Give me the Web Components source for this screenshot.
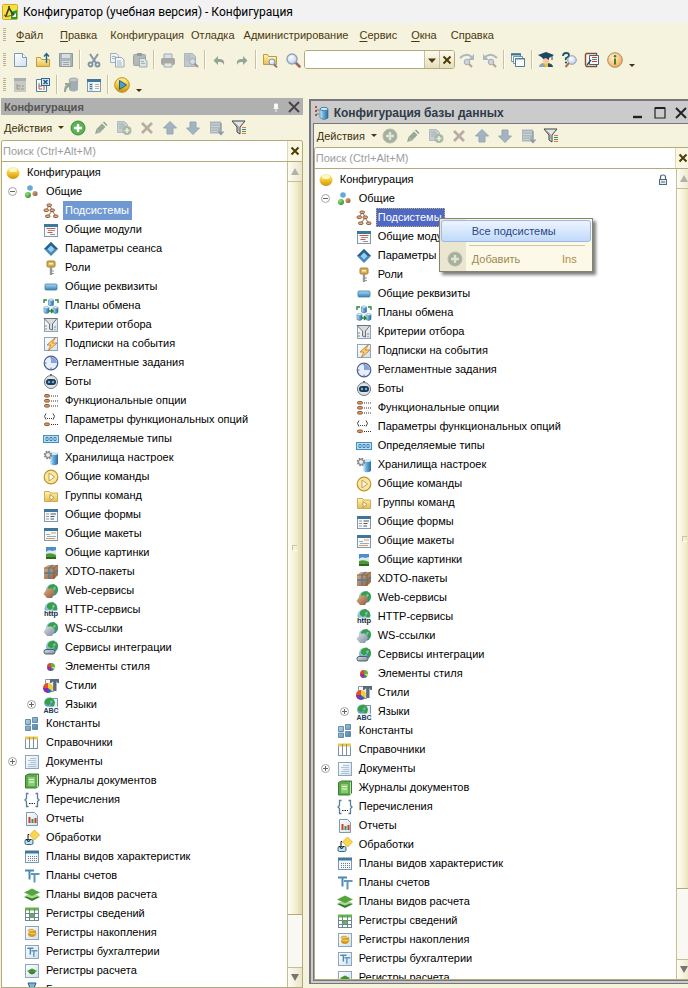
<!DOCTYPE html>
<html lang="ru">
<head>
<meta charset="utf-8">
<title>Конфигуратор</title>
<style>
body { margin: 0; font: 11px/18px "Liberation Sans", sans-serif; color: #000; }
</style>
</head>
<body>
<config-app></config-app>
<script>
const DEFS = `<defs>
<linearGradient id="gold" x1="0" y1="0" x2="0" y2="1"><stop offset="0" stop-color="#fff0a0"/><stop offset=".5" stop-color="#f5c832"/><stop offset="1" stop-color="#c8920c"/></linearGradient>
<linearGradient id="paper" x1="0" y1="0" x2="1" y2="1"><stop offset="0" stop-color="#fff"/><stop offset="1" stop-color="#cfe0ef"/></linearGradient>
<linearGradient id="cyl" x1="0" y1="0" x2="1" y2="0"><stop offset="0" stop-color="#d8f0fc"/><stop offset=".4" stop-color="#6cb0dc"/><stop offset="1" stop-color="#2c6ca0"/></linearGradient>
<linearGradient id="blue" x1="0" y1="0" x2="0" y2="1"><stop offset="0" stop-color="#a8dcf8"/><stop offset="1" stop-color="#3880b4"/></linearGradient>
<linearGradient id="steel" x1="0" y1="0" x2="1" y2="1"><stop offset="0" stop-color="#c4dcec"/><stop offset="1" stop-color="#4a7ca0"/></linearGradient>
<linearGradient id="brown" x1="0" y1="0" x2="1" y2="1"><stop offset="0" stop-color="#e0b088"/><stop offset="1" stop-color="#8c5a38"/></linearGradient>
<linearGradient id="grey" x1="0" y1="0" x2="1" y2="1"><stop offset="0" stop-color="#d8dee6"/><stop offset="1" stop-color="#808c9c"/></linearGradient>
<linearGradient id="folder" x1="0" y1="0" x2="0" y2="1"><stop offset="0" stop-color="#fdf4b8"/><stop offset="1" stop-color="#e6be50"/></linearGradient>
<radialGradient id="green" cx=".35" cy=".3" r=".8"><stop offset="0" stop-color="#90e070"/><stop offset="1" stop-color="#2f8a2c"/></radialGradient>
<radialGradient id="sky" cx=".35" cy=".3" r=".8"><stop offset="0" stop-color="#c4ecfc"/><stop offset="1" stop-color="#2c78b8"/></radialGradient>
<radialGradient id="glass" cx=".4" cy=".35" r=".7"><stop offset="0" stop-color="#fff"/><stop offset="1" stop-color="#b4ccec"/></radialGradient>
<radialGradient id="orange" cx=".4" cy=".35" r=".7"><stop offset="0" stop-color="#fff4d8"/><stop offset="1" stop-color="#f0a848"/></radialGradient>
</defs>`;
const plus = (fill, rim) => `<circle cx="8" cy="8" r="7" fill="${fill}" stroke="${rim}"/><path d="M8 4v8M4 8h8" stroke="#fff" stroke-width="2.4"/>`;
const plusOff = '<circle cx="8" cy="8" r="7" fill="#a5b09c" stroke="#b4bcaa"/><path d="M8 4v8M4 8h8" stroke="#dfe4d4" stroke-width="2.4"/>';
const page = '<rect x="1.5" y="1.5" width="13" height="13" fill="url(#paper)" stroke="#8ba6bd"/>';
const globe = (x, y, r) => `<circle cx="${x}" cy="${y}" r="${r}" fill="url(#sky)"/><path d="M${x - 2} ${y - r + 1}q-3 2-2 5l3 2 3-2-1-2 3-2-2-2zM${x + 2} ${y - r + 1}l2 3-2 3 1 3 2-1 1-4-1-3z" fill="#38a040"/>`;
const loupe = '<path d="M10.500 10.500l4 4" stroke="#a06a58" stroke-width="2.600" stroke-linecap="round"/><circle cx="7" cy="7" r="5" fill="url(#glass)" stroke="#93a0b8" stroke-width="1.400"/>';
const miniLoupe = '<path d="M12 12.500l3 2.800" stroke="#9b6a50" stroke-width="1.800"/><circle cx="10" cy="10" r="3" fill="url(#glass)" stroke="#7e92b0"/>';
const option = y => `<rect x="1.500" y="${y}" width="5" height="2.600" rx="1.300" fill="#d59a66" stroke="#8e5b39"/><path d="M8 ${y + 1.500}h8" stroke="#333" stroke-dasharray="1 1"/>`;
const node = (x, y) => `<rect x="${x}" y="${y}" width="4.500" height="2.500" rx="1.200" fill="#e3b084" stroke="#86502d" stroke-width=".900"/>`;
const can = (x, y) => `<path d="M${x} ${y}v5q2.500 1.800 5 0v-5z" fill="url(#cyl)" stroke="#3a7298" stroke-width=".600"/><ellipse cx="${x + 2.500}" cy="${y}" rx="2.500" ry="1.100" fill="#d7effb" stroke="#5f9abf" stroke-width=".500"/>`;
const tt = '<path d="M1 2.500h9M5.500 2v9.500" fill="none" stroke="#4c8ab4" stroke-width="2"/><path d="M7 6h8.500M10.500 5.500v9" fill="none" stroke="#5f98bc" stroke-width="2"/>';
const win = body => `<rect x="1.500" y="2.500" width="13" height="12" fill="#f5f9fc" stroke="#8299aa"/><path d="M1 3.500h14" stroke="#3f769c" stroke-width="3"/>${body}`;
const ICONS = {
app: '<rect x=".500" y=".500" width="15" height="15" rx="1" fill="#f9df46" stroke="#d3ac1b"/><path d="M9 8l6-2v9H9z" fill="#13a43b"/><path d="M7 2v3M7 4L3.500 13M7 4l5 8" fill="none" stroke="#3d3b22" stroke-width="1.600"/><path d="M2 11q4 3 9-1" fill="none" stroke="#59552a"/><path d="M10 13l4-4v4z" fill="#fff"/>',
newdoc: '<path d="M2.500 1.500h8l4 4v9h-12z" fill="url(#paper)" stroke="#7b9ab6"/><path d="M10.500 1.500v4h4" fill="#fff" stroke="#7b9ab6"/>',
open: '<path d="M1.500 5.500h4l1 2h8v7h-13z" fill="url(#folder)" stroke="#c39c36"/><path d="M11.500 11V2M9 4.500l2.500-3 2.500 3" fill="none" stroke="#28648a" stroke-width="1.400"/>',
save: '<path d="M1.500 1.500h13v13h-13z" fill="#a9b4bb" stroke="#8c999f"/><path d="M4 2h8v4H4zM4 9h8v5H4z" fill="#d8dedf"/><path d="M5 10.500h6M5 12.500h6" stroke="#98a5ac"/>',
cut: '<path d="M4 2l6 9M12 2L6 11" stroke="#8596a6" stroke-width="2"/><circle cx="4.500" cy="12.500" r="2" fill="none" stroke="#7d93a8" stroke-width="1.800"/><circle cx="11.500" cy="12.500" r="2" fill="none" stroke="#7d93a8" stroke-width="1.800"/>',
copy: '<path d="M1.500 1.500h6l2 2v7h-8z" fill="#eef2f2" stroke="#a1b0ba"/><path d="M6.500 5.500h6l2.500 2.500v7h-8.500z" fill="#f1f5f5" stroke="#94a7b5"/><path d="M3 4.500h4M3 6.500h3M8 9h4M8 11h5M8 13h5" stroke="#a4b6c2"/>',
paste: '<rect x="1.500" y="2.500" width="12" height="11" rx="1" fill="#b5bab5" stroke="#9ba4a3"/><rect x="5" y="1" width="5" height="3" fill="#8f9da4"/><path d="M7.500 6.500h5l2.500 2.500v6H7.500z" fill="#dee4e4" stroke="#99aab5"/><path d="M9 9.500h3M9 11.500h4" stroke="#9fb0b9"/>',
print: '<path d="M4 2h8v5H4z" fill="#d9dfe3" stroke="#a1adb5"/><rect x="1" y="6" width="14" height="7" rx="2" fill="#a5a7a8"/><path d="M3 9h10" stroke="#c7a28e"/><path d="M4 11h8v4H4z" fill="#e4e6e3" stroke="#a1adb5"/>',
preview: '<path d="M1.500 1.500h8l3 3v10h-11z" fill="#c3cacd" stroke="#a9b5bc"/><path d="M3 4h5M3 6h4M3 8h3" stroke="#aab5bb"/><path d="M11.500 11.500l3.500 3.500" stroke="#b08f83" stroke-width="2"/><circle cx="9.500" cy="9.500" r="3" fill="#d5dbe2" stroke="#9aa6b3"/>',
undo: '<path d="M7 4v3h2q5 0 4 6q-1-3-4-3H7v3L2.500 8.500z" fill="#93a594"/>',
redo: '<path d="M9 4v3H7q-5 0-4 6q1-3 4-3h2v3l4.500-4.500z" fill="#93a594"/>',
findfolder: '<path d="M1.500 2.500h4l1 2h8v8h-13z" fill="url(#folder)" stroke="#c39c36"/><path d="M6 6h7" stroke="#fff8d5"/>' + miniLoupe,
loupe: loupe,
stepfwd: '<path d="M1 6q6-6 12-1" fill="none" stroke="#a9b8c1" stroke-width="2"/><path d="M15 2v6H9z" fill="#a9b8c1"/><path d="M10 12l3 3" stroke="#b99c92" stroke-width="2"/><circle cx="8" cy="10" r="2.800" fill="#cdd2dc" stroke="#a7acb6"/>',
stepback: '<path d="M15 6Q9 0 3 5" fill="none" stroke="#a9b8c1" stroke-width="2"/><path d="M1 2v6h6z" fill="#a9b8c1"/><path d="M11 12l3 3" stroke="#b99c92" stroke-width="2"/><circle cx="9" cy="10" r="2.800" fill="#cdd2dc" stroke="#a7acb6"/>',
windows: '<path d="M1.500 1.500h9v8h-9z" fill="#fff" stroke="#7f99a8"/><path d="M1 2.500h10" stroke="#39779b" stroke-width="2"/><path d="M3.500 4.500h9v7h-9z" fill="#fff" stroke="#7195a9"/><path d="M5.500 6.500h9v8h-9z" fill="#fbfeff" stroke="#4f7b94"/><path d="M5 7h10" stroke="#4d88ac"/>',
scholar: '<path d="M1 15q1-4 5-4h4q4 0 5 4z" fill="#f0c430"/><path d="M5 11l3 4H1q0-3 4-4z" fill="#8aa8ba"/><path d="M10 11q5 1 5 4h-5z" fill="#244a65"/><rect x="5" y="4" width="6" height="8" rx="3" fill="#f3c8a5"/><path d="M4 5h7v3L8 6 5 7z" fill="#4b2f20"/><path d="M0 3l8-3 8 3-5 3H5z" fill="#1c4867"/><path d="M14 3v5" stroke="#1c4867"/>',
helpfind: '<path d="M2 4q0-3 3-3t3 2q0 2-2 2.500T5 8" fill="none" stroke="#21536f" stroke-width="1.800"/><circle cx="5" cy="10.500" r="1.100" fill="#21536f"/><path d="M8 11l-3.500 4" stroke="#a87050" stroke-width="2"/><circle cx="11" cy="8" r="4.300" fill="url(#glass)" stroke="#9c9ca8"/>',
syntax: '<path d="M2.500 1.500h10v13h-10q-1-1-1-2v-10z" fill="#fff6e8" stroke="#8a4b2c" stroke-width="1.400"/><path d="M5.500 3.500h9v9h-9z" fill="#f6faff" stroke="#3b6787"/><path d="M8 5.500h5" stroke="#d33"/><path d="M8 7.500h5" stroke="#29a33a"/><path d="M8 9.500h5" stroke="#d33"/><path d="M3 13l4-5" stroke="#234b70" stroke-width="1.300"/>',
info: '<circle cx="8" cy="8" r="7.300" fill="url(#orange)" stroke="#a88d68"/><circle cx="8" cy="4.200" r="1.300" fill="#4c7c23"/><path d="M8 6.500v6" stroke="#4c7c23" stroke-width="2"/>',
cfggrey: '<rect x="2" y="1" width="12" height="14" fill="#c6c9c4"/><path d="M2 2.500h12" stroke="#a8b0b1" stroke-width="3"/><path d="M5 7v5h3M5 9h4M10 9h2M9 12h3" fill="none" stroke="#a59585"/>',
cfgclose: '<path d="M1.500 2.500h10v12h-10z" fill="#fdfefe" stroke="#567e98"/><path d="M4 6v6h3M4 9h3M8 10h2M8 12h2" fill="none" stroke="#a65b3a"/><rect x="6.500" y="1.500" width="8" height="7" fill="#d7eaf5" stroke="#316a91"/><path d="M8.500 3l4 4M12.500 3l-4 4" stroke="#245a80" stroke-width="1.500"/>',
dbupdate: '<path d="M6 3v10q4.500 3 9 0V3z" fill="#a2aeb5"/><ellipse cx="10.500" cy="3" rx="4.500" ry="2" fill="#bfc8cb" stroke="#99a6ad"/><path d="M1 15q0-7 3-7H2V6h6v6L6 10q-3 1-3 5z" fill="#93a594"/>',
listwin: win('<rect x="3" y="6" width="4" height="8" fill="#c3d9e7"/><path d="M4 7.500h2M4 9.500h2M4 11.500h2" stroke="#496f88"/><path d="M9 7.500h4M9 9.500h4M9 11.500h4" stroke="#b6b6a7"/>'),
run: '<circle cx="8" cy="8" r="7.300" fill="url(#gold)" stroke="#c18d16"/><path d="M5.500 3.500l7 4.500-7 4.500z" fill="#4e9dca" stroke="#21628d"/>',
plus: plus('#5cb450', '#3c8c3c'), plusoff: plusOff,
pencil: '<path d="M2 14l1.500-5L9 3.500 12.500 7 7 12.500z" fill="#98a997"/><path d="M10 2.500l3.500 3.500 1-1-3.500-3.500z" fill="#849e8a"/><path d="M4 9.500l3 3" stroke="#c2c9ba"/>',
addcopy: '<path d="M1.500 1.500h7l3 3v8h-10z" fill="#c6cdd0" stroke="#b0bbc0"/><path d="M3 4h5M3 6h6M3 8h5" stroke="#a7b2b8"/><circle cx="11" cy="10.500" r="4.500" fill="#a8b8a2"/><path d="M11 8v5M8.500 10.500h5" stroke="#e8eee0" stroke-width="1.600"/>',
del: '<path d="M3 3l10 10M13 3L3 13" stroke="#b8aba3" stroke-width="2.700"/>',
up: '<path d="M8 1.500L14.500 8H11v6H5V8H1.500z" fill="#a3b3bf" stroke="#93a7b5"/>',
down: '<path d="M8 14.500L1.500 8H5V2h6v6h3.500z" fill="#a3b3bf" stroke="#93a7b5"/>',
sort: '<path d="M2 1.500h11v12H2z" fill="#acb7be"/><path d="M3 4h9M3 6.500h9M3 9h7M3 11.500h7" stroke="#ccd3d5"/><path d="M13 3v11M10.500 11.500l2.500 3 2.500-3" fill="none" stroke="#8898a4" stroke-width="1.300"/>',
filter: '<path d="M1 1h13L9 7v7l-3-2V7z" fill="#e3e6e8" stroke="#3e4347"/><path d="M3 2.500l4 4v5" fill="none" stroke="#777"/><path d="M11 7.500h4M11 13.500h4" stroke="#e27b35"/><path d="M11 9.500h4" stroke="#367f9f"/><path d="M11 11.500h4" stroke="#569545"/>',
root: '<ellipse cx="8" cy="8" rx="6.500" ry="6" fill="url(#gold)"/><ellipse cx="8" cy="5" rx="4" ry="2" fill="#fff8c8"/>',
common: '<circle cx="6" cy="4" r="2.800" fill="#64a9d8"/><circle cx="4" cy="11" r="3" fill="url(#green)"/><circle cx="11" cy="9.500" r="2.600" fill="url(#brown)"/>',
subsys: '<path d="M6 3L3 7M7 3l2 4M9 8l-4 5M9 8l4 5" fill="none" stroke="#7e5b49" stroke-width=".900"/>' + node(4, 1) + node(1, 6) + node(7, 6) + node(2.5, 12) + node(10.5, 12),
modules: win('<path d="M3.500 6.500h9M4.500 10.500h5" stroke="#c95745"/><path d="M5 8.500h7M7 12.500h5" stroke="#a98d83"/>'),
params: '<path d="M8 1l7 7-7 7-7-7z" fill="#4889b9"/><path d="M8 1l7 7H1z" fill="#2b6088"/><path d="M8 4.500l3.500 3.500L8 11.500 4.500 8z" fill="#8fd0f4"/>',
key: '<rect x="4" y="1" width="8" height="6" rx="1" fill="#d8b04c" stroke="#a68236"/><rect x="6" y="3" width="4" height="1.500" fill="#fff3b6"/><path d="M8 7v8" stroke="#94989b" stroke-width="2.400"/><path d="M9 11h2M9 13.500h2" stroke="#999"/>',
attrs: '<rect x="2" y="5" width="12" height="6" rx="1" fill="url(#blue)" stroke="#3f7da4" stroke-width=".800"/>',
exchange: can(5.5, 2) + can(1, 9.500) + can(10, 9.500) + '<path d="M1 5V2h3M15 5V2h-3M6 13h4M8 11l2 2-2 2" fill="none" stroke="#25862e" stroke-width="1.400"/>',
criteria: page + '<path d="M3 8v5M12 9v4" stroke="#b27a56" stroke-dasharray="2 1"/><path d="M1 1.500h13L9.500 7v6l-3-1V7z" fill="#d8dbde" stroke="#6d7275"/>',
events: page + '<path d="M13 1L4 9h4l-3 6 9-8H9z" fill="#ffd36a" stroke="#cc812a" stroke-width=".900"/>',
jobs: '<circle cx="8" cy="8" r="6.800" fill="#e4efff" stroke="#415e9a" stroke-width="1.200"/><path d="M8 8V2a6 6 0 0 1 6 6z" fill="#86a4db"/><path d="M8 2v1.500M8 12.500V14M2 8h1.500" stroke="#db4731"/>',
bot: '<path d="M8 2V0M1 8h14" stroke="#596774" stroke-width="2"/><ellipse cx="8" cy="8" rx="6.500" ry="6.500" fill="#dce3e9" stroke="#6d7984"/><rect x="3" y="5" width="10" height="6" rx="3" fill="#25384b"/><circle cx="6" cy="8" r="1.200" fill="#59baf2"/><circle cx="10" cy="8" r="1.200" fill="#59baf2"/>',
fopts: option(1.5) + option(6.500) + option(11.500),
fparams: '<path d="M3 1.500Q0 4 3 7.500M10 1.500q3 2.500 0 6" fill="none" stroke="#444"/><path d="M4 6.500h5" stroke="#444" stroke-dasharray="1 1"/>' + option(11),
types: '<rect x=".500" y="4.500" width="15" height="7" fill="#b8def4" stroke="#4490c0"/><path d="M3 6.500h2v3H3zM7 6.500h2v3H7zM11 6.500h2v3h-2z" fill="#fff" stroke="#347eae"/>',
storage: '<path d="M7 4v10q4 2.500 8 0V3z" fill="url(#cyl)"/><ellipse cx="11" cy="3.500" rx="4" ry="1.600" fill="#c8e9f8"/><circle cx="5" cy="5" r="3.200" fill="#d8d9db" stroke="#777b80" stroke-width="2" stroke-dasharray="1.600 .900"/><circle cx="5" cy="5" r="2.500" fill="#eee" stroke="#888"/>',
command: '<circle cx="8" cy="8" r="6.800" fill="#fae79c" stroke="#bd9334" stroke-width="1.200"/><path d="M6 4l5.500 4L6 12z" fill="#fffef1" stroke="#c1a058"/>',
group: '<path d="M1.500 3.500h5l1 1.500h7v8.500h-13z" fill="url(#folder)" stroke="#d0ac50"/><path d="M7 6.500l4 3-4 3z" fill="#fffef1" stroke="#bd9848"/>',
forms: win('<path d="M3 7h3M3 9.500h3M3 12h3" stroke="#999"/><path d="M7.500 7H13M7.500 9.500h4M7.500 12H11" stroke="#555"/>'),
layouts: win('<path d="M8 7h5M3 12.500h9" stroke="#e09a58"/><path d="M3 8.500h4M4 10.500h9" stroke="#98acbc"/>'),
pictures: '<rect x="3" y="2" width="10" height="12" fill="#4d8dcc"/><path d="M3 7q3-3 6-1l4-1v5H3z" fill="#dceaf0"/><path d="M3 9q5-2 10 1v4H3z" fill="#4b9a31"/><path d="M3 12h10v2H3z" fill="#2f691e"/>',
xdto: '<path d="M1 4l4-3h10v10l-4 4H1z" fill="url(#brown)"/><path d="M1 4h10v11M11 4l4-3" fill="none" stroke="#7c5a40" stroke-width=".800"/><path d="M1 9h10l4-3M6 4v11M6 4l4-3" fill="none" stroke="#487fa4" stroke-width="1.300"/>',
web: globe(9, 7, 6) + '<path d="M4 5.500h5l3 4-3 5.500H4l-3.500-4z" fill="url(#brown)"/>',
http: globe(8, 6.5, 6.500) + '<rect x="1" y="8.500" width="14" height="6" fill="#fff" opacity=".85"/><text x="8" y="14" font-size="7.500" font-weight="bold" text-anchor="middle" fill="#1b2b38" font-family="Liberation Sans">http</text>',
ws: globe(9, 7, 6) + '<path d="M4 5.500h5l3 4-3 5.500H4l-3.500-4z" fill="url(#grey)"/>',
integ: globe(9, 6.5, 6) + '<rect x="1" y="9.500" width="11" height="4.500" rx="2" fill="url(#grey)" stroke="#49606e"/>',
styleitem: '<circle cx="8" cy="8" r="4" fill="#e9d53b"/><path d="M8 8L4 8a4 4 0 0 1 4-4z" fill="#e24535"/><path d="M8 8V4a4 4 0 0 1 4 4z" fill="#58b547"/><path d="M8 8H4a4 4 0 0 0 4 4z" fill="#8a36a5"/><path d="M8 8v4a4 4 0 0 0 3-1.500z" fill="#2e75cf"/>',
styles: '<path d="M2.500 1.500h8v12h-8z" fill="url(#paper)" stroke="#8892a8"/><path d="M7 1h9v4h-1.500l-1-2v10h-3V3L8 5H7z" fill="#576a79"/><circle cx="5" cy="10" r="5" fill="#f0cd32"/><path d="M5 10V5a5 5 0 0 0-5 5z" fill="#e64d34"/><path d="M5 10H0a5 5 0 0 0 5 5z" fill="#8030b0"/><path d="M5 10v5a5 5 0 0 0 4-2z" fill="#2864d0"/>',
langs: '<path d="M8.500 1.500h6v12h-6z" fill="url(#paper)" stroke="#7994a8"/>' + globe(6, 5.5, 5) + '<rect x="0" y="9.500" width="16" height="6" fill="#fff" opacity=".8"/><text x="8" y="15.500" font-size="7" font-weight="bold" text-anchor="middle" fill="#1c3c56" font-family="Liberation Sans">ABC</text>',
consts: '<path d="M1.500 3.500h5v5h-5zM8.500 1.500h5v5h-5zM1.500 10h5v4.500h-5zM8.500 8.500h5v5h-5z" fill="url(#steel)" stroke="#5886a8" stroke-width=".900"/>',
refs: '<rect x="1.500" y="2.500" width="12" height="11" fill="#fff" stroke="#7893a7"/><path d="M1 3h13" stroke="#efc63f" stroke-width="3"/><path d="M5.500 2v12M9.500 2v12" stroke="#7893a7"/>',
docs: page + '<path d="M6 4.500h6M4 6.500h8M6 8.500h6M4 10.500h8M4 12.500h8" stroke="#b0c4d4"/>',
journals: '<path d="M1.500 2.500l3-1.500h10v12l-2 2h-11z" fill="#5caa4b" stroke="#3a7b34"/><rect x="4" y="4" width="7" height="9" fill="#88cd6c"/><path d="M5 6.500h5M5 9h5" stroke="#f1ffe8"/><path d="M13.500 2v12" stroke="#c4e3b8"/>',
enums: '<path d="M4.500 1.500h-2v5L1 8l1.500 1.500v5h2M11.500 1.500h2v5L15 8l-1.500 1.500v5h-2" fill="none" stroke="#5a7f96" stroke-width="1.300"/><path d="M5 11.500h6" stroke="#222" stroke-dasharray="1.500 1"/>',
reports: '<path d="M2.500 1.500h8l3 3v10h-11z" fill="url(#paper)" stroke="#7f9ab0"/><path d="M5.500 12V6" stroke="#d03c2a" stroke-width="2"/><path d="M8.500 12V8" stroke="#3b9641" stroke-width="2"/><path d="M11.500 12V7" stroke="#d03c2a" stroke-width="2"/>',
process: '<path d="M10.500 0l5 5-5 5-5-5z" fill="#fbd84b" stroke="#d0a035" stroke-width=".700"/><rect x="1" y="9.500" width="8" height="5" rx="1.500" fill="#c4dff0" stroke="#2f668d"/><path d="M5 4.500h-1v6M2 9l2.500 3L7 9" fill="none" stroke="#111"/>',
chartypes: '<rect x="1.500" y="2.500" width="13" height="11" fill="#f3f8fc" stroke="#7c96aa"/><path d="M1 3h14" stroke="#44779a" stroke-width="3"/><path d="M4 7.500h9M4 9.500h9M4 11.500h9" stroke="#667d8d" stroke-dasharray="1 1"/>',
accounts: tt,
calctypes: '<path d="M8 7l8 3-8 4-8-4z" fill="#387a2b"/><path d="M8 6l7 3-7 2.500L1 9z" fill="#a9d890"/><path d="M8 1.500l8 4L8 9 0 5.500z" fill="#54a63e"/>',
inforeg: '<rect x="1.500" y="2.500" width="13" height="12" fill="#fff" stroke="#6d8799"/><path d="M1 3h14M6 9.500h4" stroke="#65b644" stroke-width="3"/><path d="M5.500 2v12M10.500 2v12M2 7.500h12M2 11.500h12" stroke="#6d8799"/>',
accumreg: page + '<path d="M4 9q0-2 4-2l4-2v3q0 4-4 4-4 0-4-3z" fill="#d69b1d"/><ellipse cx="7" cy="5.500" rx="3" ry="1.300" fill="#f7cd49" stroke="#cd932b" stroke-width=".800"/><ellipse cx="8.500" cy="8.500" rx="3.500" ry="1.300" fill="#f7cd49" stroke="#cd932b" stroke-width=".800"/>',
accreg: page + `<g transform="translate(2.500 2.500) scale(.7)">${tt}</g>`,
calcreg: page + '<path d="M8 5.500l5 2.500-5 3-5-3z" fill="#42912c"/><path d="M5 9.500l3 1.500 3-1.500" stroke="#28651b" fill="none"/>',
bproc: '<path d="M4 1h8l-2 5H6z" fill="#73b9e2" stroke="#235f8c"/><path d="M8 6v4" stroke="#555"/><circle cx="8" cy="11.500" r="3" fill="#e5b98d" stroke="#7e5131"/>',
dbwin: '<path d="M2 1v12" stroke="#d6402d" stroke-width="2" stroke-dasharray="2 2"/><path d="M2 5h3M2 9h3" stroke="#4c8c9c"/><path d="M6 4v9q4 3 8 0V4z" fill="url(#cyl)" stroke="#386d91" stroke-width=".600"/><ellipse cx="10" cy="4" rx="4" ry="1.700" fill="#c8e7f6" stroke="#4685ab"/>',
lock: '<path d="M5.500 8V5q0-2 2.500-2t2.500 2v3" fill="none" stroke="#4d6778" stroke-width="1.200"/><rect x="4.500" y="7.500" width="7" height="5" fill="#e5edf2" stroke="#4d6778"/><path d="M6 10h4" stroke="#4d6778"/>',
pin: '<path d="M6.500 5h3v4h-3zM5.500 9.500h5M8 10v3" fill="#fff" stroke="#f4f4f4" stroke-width="1"/>',
close: '<path d="M3 3l10 10M13 3L3 13" stroke="currentColor" stroke-width="1.900"/>',
clear: '<path d="M4.500 4.500l7 7M11.500 4.500l-7 7" stroke="#4d3c04" stroke-width="2"/>',
drop: '<path d="M4 6.500h8L8 11z" fill="#4b3a08"/>',
min: '<path d="M2 12h9" stroke="currentColor" stroke-width="2.400"/>',
max: '<path d="M3 3h10v10H3z" fill="none" stroke="currentColor" stroke-width="1.200"/><path d="M3 3h10" stroke="currentColor" stroke-width="2"/>'
};
const COMMON = [['modules','Общие модули'],['params','Параметры сеанса'],['key','Роли'],['attrs','Общие реквизиты'],['exchange','Планы обмена'],['criteria','Критерии отбора'],['events','Подписки на события'],['jobs','Регламентные задания'],['bot','Боты'],['fopts','Функциональные опции'],['fparams','Параметры функциональных опций'],['types','Определяемые типы'],['storage','Хранилища настроек'],['command','Общие команды'],['group','Группы команд'],['forms','Общие формы'],['layouts','Общие макеты'],['pictures','Общие картинки'],['xdto','XDTO-пакеты'],['web','Web-сервисы'],['http','HTTP-сервисы'],['ws','WS-ссылки'],['integ','Сервисы интеграции'],['styleitem','Элементы стиля'],['styles','Стили'],['langs','Языки','plus']];
const TOP = [['consts','Константы'],['refs','Справочники'],['docs','Документы','plus'],['journals','Журналы документов'],['enums','Перечисления'],['reports','Отчеты'],['process','Обработки'],['chartypes','Планы видов характеристик'],['accounts','Планы счетов'],['calctypes','Планы видов расчета'],['inforeg','Регистры сведений'],['accumreg','Регистры накопления'],['accreg','Регистры бухгалтерии'],['calcreg','Регистры расчета']];
const PROCESSES = ['bproc', 'Бизнес-процессы'];

const RESET = ':host,*{box-sizing:border-box}button{font:inherit;color:inherit;border:0;padding:0;margin:0;background:none;text-align:left}';
function define(name, render) {
  customElements.define(name, class extends HTMLElement {
    connectedCallback() {
      if (this.shadowRoot) return;
      this.attachShadow({ mode: 'open' }).innerHTML = render(this);
    }
  });
}
const icon = n => `<ui-icon name="${n}"></ui-icon>`;
const attr = (el, n) => el.getAttribute(n) || '';

define('ui-icon', el => `<style>:host{display:block;flex:none;width:16px;height:16px}svg{display:block}</style>
<svg width="16" height="16" viewBox="0 0 16 16" aria-hidden="true">${DEFS}${ICONS[attr(el, 'name')] || ''}</svg>`);

define('tool-button', el => `<style>${RESET}:host{display:block;flex:none}button{display:flex;justify-content:center;align-items:center;width:23px;height:20px}</style>
<button aria-label="${attr(el, 'label')}">${icon(attr(el, 'icon'))}</button>`);

define('tool-separator', () => `<style>:host{display:block;flex:none;width:5px;height:19px;background:linear-gradient(90deg,transparent 2px,#c9c19c 2px 3px,#fffef6 3px 4px,transparent 4px)}</style>`);
define('bar-grip', () => `<style>:host{display:block;flex:none;width:3px;height:14px;margin:0 2px 0 3px;background:repeating-linear-gradient(#b9b28b 0 1px,transparent 1px 2px)}</style>`);
define('more-arrow', () => `<style>${RESET}:host{display:block;flex:none;align-self:flex-end;margin-left:2px}button{display:block;width:8px;height:10px}button::before{content:"";display:block;width:0;border:3px solid transparent;border-top-color:#3d3210;margin-left:1px}</style><button aria-label="Параметры панели"></button>`);

define('title-bar', () => `<style>:host{display:flex;align-items:center;gap:5px;height:23px;flex:none;padding:0 2px;background:#f2f2f2;font:12px/16px Roboto,sans-serif;white-space:nowrap}</style>
${icon('app')}<slot></slot>`);

define('menu-bar', () => {
  const items = [['<u>Ф</u>айл',17],['<u>П</u>равка',13],['Конфигурация',7],['Отладка',9],['Администрирование',11],['<u>С</u>ервис',14],['<u>О</u>кна',14],['Сп<u>р</u>авка',0]];
  return `<style>${RESET}:host{display:flex;align-items:center;height:24px;flex:none;color:#4a3a10}nav{display:flex;padding-left:8px}button{white-space:nowrap}u{text-underline-offset:2px}</style>
<bar-grip></bar-grip><nav>${items.map(([t, g]) => `<button style="margin-right:${g}px">${t}</button>`).join('')}</nav>`;
});

define('tool-bar', () => `<style>:host{display:flex;align-items:center;flex:none;height:25px}</style><bar-grip></bar-grip><slot></slot>`);

define('combo-search', () => `<style>${RESET}:host{display:flex;flex:none;width:151px;height:19px;border:1px solid #b3aa7c;border-radius:3px;background:#fff;overflow:hidden}
input{flex:1;min-width:0;border:0;outline:0;font:inherit}button{width:15px;display:flex;justify-content:center;align-items:center;background:linear-gradient(#fcfaf0,#e6dfbd);border-left:1px solid #c8bf94}</style>
<input aria-label="Поиск"><button aria-label="Список">${icon('drop')}</button><button aria-label="Очистить">${icon('clear')}</button>`);

define('search-field', () => `<style>${RESET}:host{display:flex;flex:none;height:21px;border:1px solid #b3a97a;border-bottom:0;border-radius:3px 3px 0 0;background:#fff;overflow:hidden}
input{flex:1;min-width:0;border:0;outline:0;padding:0 2px 0 1px;font:11px/16px "Liberation Sans",sans-serif}input::placeholder{color:#9d9d9d;opacity:1}
button{width:15px;display:flex;justify-content:center;align-items:center;background:#faf6e2;border-left:1px solid #e0d9b8}</style>
<input aria-label="Поиск" placeholder="Поиск (Ctrl+Alt+M)"><button aria-label="Очистить">${icon('clear')}</button>`);

define('action-bar', el => `<style>${RESET}:host{display:flex;align-items:center;flex:none;height:25px;padding-left:3px;color:#3e310c}
.menu{display:flex;align-items:center;justify-content:space-between;width:60px;margin-right:2px}.menu::after{content:"";border:3px solid transparent;border-top-color:#4b3a08;border-bottom:0}</style>
<button class="menu">Действия</button>${[[el.hasAttribute('readonly') ? 'plusoff' : 'plus','Добавить'],['pencil','Изменить'],['addcopy','Скопировать'],['del','Удалить'],['up','Вверх'],['down','Вниз'],['sort','Упорядочить'],['filter','Отбор']].map(([i, l]) => `<tool-button icon="${i}" label="${l}"></tool-button>`).join('')}`);

define('tree-row', el => {
  const level = +attr(el, 'level'), state = attr(el, 'state');
  const sel = attr(el, 'selected');
  return `<style>${RESET}:host{display:flex;align-items:center;height:19px;padding-left:${level ? level * 19 - 13 : 3}px;white-space:nowrap}
.exp{width:9px;height:9px;margin-right:7px;border-radius:50%;flex:none}
button.exp{border:1px solid #a5a5a5;background:linear-gradient(#666,#666) center/5px 1px no-repeat${state === 'plus' ? ',linear-gradient(#666,#666) center/1px 5px no-repeat' : ''}}
.label{height:19px;line-height:19px;padding:0 2px;margin-left:4px}
.soft{background:#7099d1;color:#fff;padding-right:3px}.strong{background:#4e68c4;color:#fff;outline:1px dotted #c9b45e;outline-offset:-1px;padding-right:3px}
.end{margin-left:auto;margin-right:5px}</style>
${level ? (state ? `<button class="exp" aria-label="${state === 'plus' ? 'Развернуть' : 'Свернуть'}"></button>` : '<span class="exp"></span>') : ''}${icon(attr(el, 'icon'))}<span class="label ${sel}"><slot></slot></span>${el.hasAttribute('locked') ? `<span class="end">${icon('lock')}</span>` : ''}`;
});

define('scroll-bar', () => `<style>${RESET}:host{display:flex;flex-direction:column;flex:none;width:15px;border-left:1px solid #c6bd94;background:#f9f8f3}
button{height:20px;flex:none;display:flex;align-items:center;justify-content:center;background:linear-gradient(90deg,#fdfcf4,#eae5c9)}
.up{border-bottom:1px solid #c6bd94}.dn{border-top:1px solid #c6bd94}i{border:4px solid transparent}.up i{border-bottom:7px solid #b3b1a5;border-top:0}.dn i{border-top:7px solid #77756d;border-bottom:0}
.thumb{flex:var(--thumb,14);display:flex;align-items:center;justify-content:center;border-bottom:1px solid #b3a97a;background:linear-gradient(90deg,#fffef8,#f2edcb 60%,#ddd6ae)}.thumb::before{content:"";width:4px;height:4px;border:1px solid #cbc49e;border-right:0;border-bottom-color:#fff}.rest{flex:1}</style>
<button class="up" aria-label="Вверх"><i></i></button><div class="thumb"></div><div class="rest"></div><button class="dn" aria-label="Вниз"><i></i></button>`);

define('config-tree', el => {
  const row = (lv, [i, t, s]) => `<tree-row role="treeitem" level="${lv}" icon="${i}" state="${s || ''}">${t}</tree-row>`;
  const top = el.hasAttribute('locked') ? TOP : [...TOP, PROCESSES];
  return `<style>${RESET}:host{display:flex;flex:1;min-height:0;background:#fff;border:1px solid #b3a97a;border-right-width:var(--edge,1px)}.rows{flex:1;min-width:0;overflow:hidden;padding-top:1px}</style>
<div class="rows" role="tree" aria-label="Конфигурация"><tree-row role="treeitem" level="0" icon="root" ${el.hasAttribute('locked') ? 'locked' : ''}>Конфигурация</tree-row>${row(1, ['common','Общие','minus'])}<tree-row role="treeitem" level="2" icon="subsys" selected="${attr(el, 'selection')}">Подсистемы</tree-row>${COMMON.map(r => row(2, r)).join('')}${top.map(r => row(1, r)).join('')}</div><scroll-bar></scroll-bar>`;
});

define('side-pane', () => `<style>${RESET}:host{display:flex;flex-direction:column;flex:0 0 44%;min-width:0;padding-left:1px}
header{display:flex;align-items:center;flex:none;height:17px;padding:0 1px 0 3px;background:#b0b0b0;color:#555;font-weight:bold}h2{font:inherit;margin:0 auto 0 0}header ui-icon{color:#444}button:last-child{margin-left:2px}</style>
<header><h2>Конфигурация</h2><button aria-label="Закрепить">${icon('pin')}</button><button aria-label="Закрыть">${icon('close')}</button></header>
<action-bar></action-bar><search-field></search-field><config-tree selection="soft"></config-tree>`);

define('db-window', () => `<style>${RESET}:host{display:flex;flex-direction:column;flex:1;min-width:0;margin:1px 0 4px 6px;border:solid #77777a;border-width:2px 0 1px 2px;background:#cbcbcb;padding:0 0 2px 2px;position:relative}
header{display:flex;align-items:center;gap:4px;flex:none;height:22px;padding:2px 0 0 1px;color:#2e3b48}h2{font:bold 12px/18px "Liberation Sans",sans-serif;margin:0 auto 0 0;white-space:nowrap}header button{color:#222;margin-left:1px}header button:last-child{margin-right:-1px}
.body{display:flex;flex-direction:column;flex:1;min-height:0;margin-right:-3px;border:solid #77777a;border-width:1px 0 1px 1px;background:#f5f2dd}
action-bar{height:23px}config-tree{--edge:0;--thumb:10}slot{display:block;position:absolute;left:128px;top:117px}</style>
<header>${icon('dbwin')}<h2>Конфигурация базы данных</h2><button aria-label="Свернуть">${icon('min')}</button><button aria-label="Развернуть">${icon('max')}</button><button aria-label="Закрыть">${icon('close')}</button></header>
<div class="body"><action-bar readonly></action-bar><search-field></search-field><config-tree locked selection="strong"></config-tree></div><slot></slot>`);

define('context-menu', () => `<style>${RESET}:host{display:block;width:154px;border:1px solid #85826f;padding:1px;background:linear-gradient(90deg,#ebe6cf 26px,#fcf9e9 26px);box-shadow:3px 3px 3px rgba(0,0,0,.5);color:#a08a50}
button{display:flex;align-items:center;width:100%}.hot{height:22px;padding-left:30px;border:1px solid #9cb9e6;border-radius:3px;background:linear-gradient(#edf4ff,#c0dafa);color:#2c4684}
hr{border:0;border-top:1px solid #cdc6a8;margin:3px 6px 2px 28px}.off{height:22px;padding:0 14px 0 6px}.off ui-icon{margin-right:9px}kbd{font:inherit;margin-left:auto;color:#b18a48}</style>
<div role="menu"><button class="hot" role="menuitem">Все подсистемы</button><hr><button class="off" role="menuitem" aria-disabled="true">${icon('plusoff')}<span><u>Д</u>обавить</span><kbd>Ins</kbd></button></div>`);

define('config-app', () => {
  const bar = list => list.split(' ').map(n => n === '|' ? '<tool-separator></tool-separator>' : n === '#' ? '<combo-search></combo-search>' : n === '>' ? '<more-arrow></more-arrow>' : `<tool-button icon="${n}" label="${n}"></tool-button>`).join('');
  return `<style>:host{display:flex;flex-direction:column;height:100vh;overflow:hidden;background:#f5f2dd}main{display:flex;flex:1;min-height:0;padding-top:1px}</style>
<title-bar>Конфигуратор (учебная версия) - Конфигурация</title-bar><menu-bar></menu-bar>
<tool-bar>${bar('newdoc open save | cut copy paste | print preview | undo redo | findfolder loupe # stepfwd stepback | windows | scholar helpfind syntax info >')}</tool-bar>
<tool-bar>${bar('cfggrey cfgclose | dbupdate listwin | run >')}</tool-bar>
<main><side-pane></side-pane><db-window><context-menu></context-menu></db-window></main>`;
});
</script>
</body>
</html>
